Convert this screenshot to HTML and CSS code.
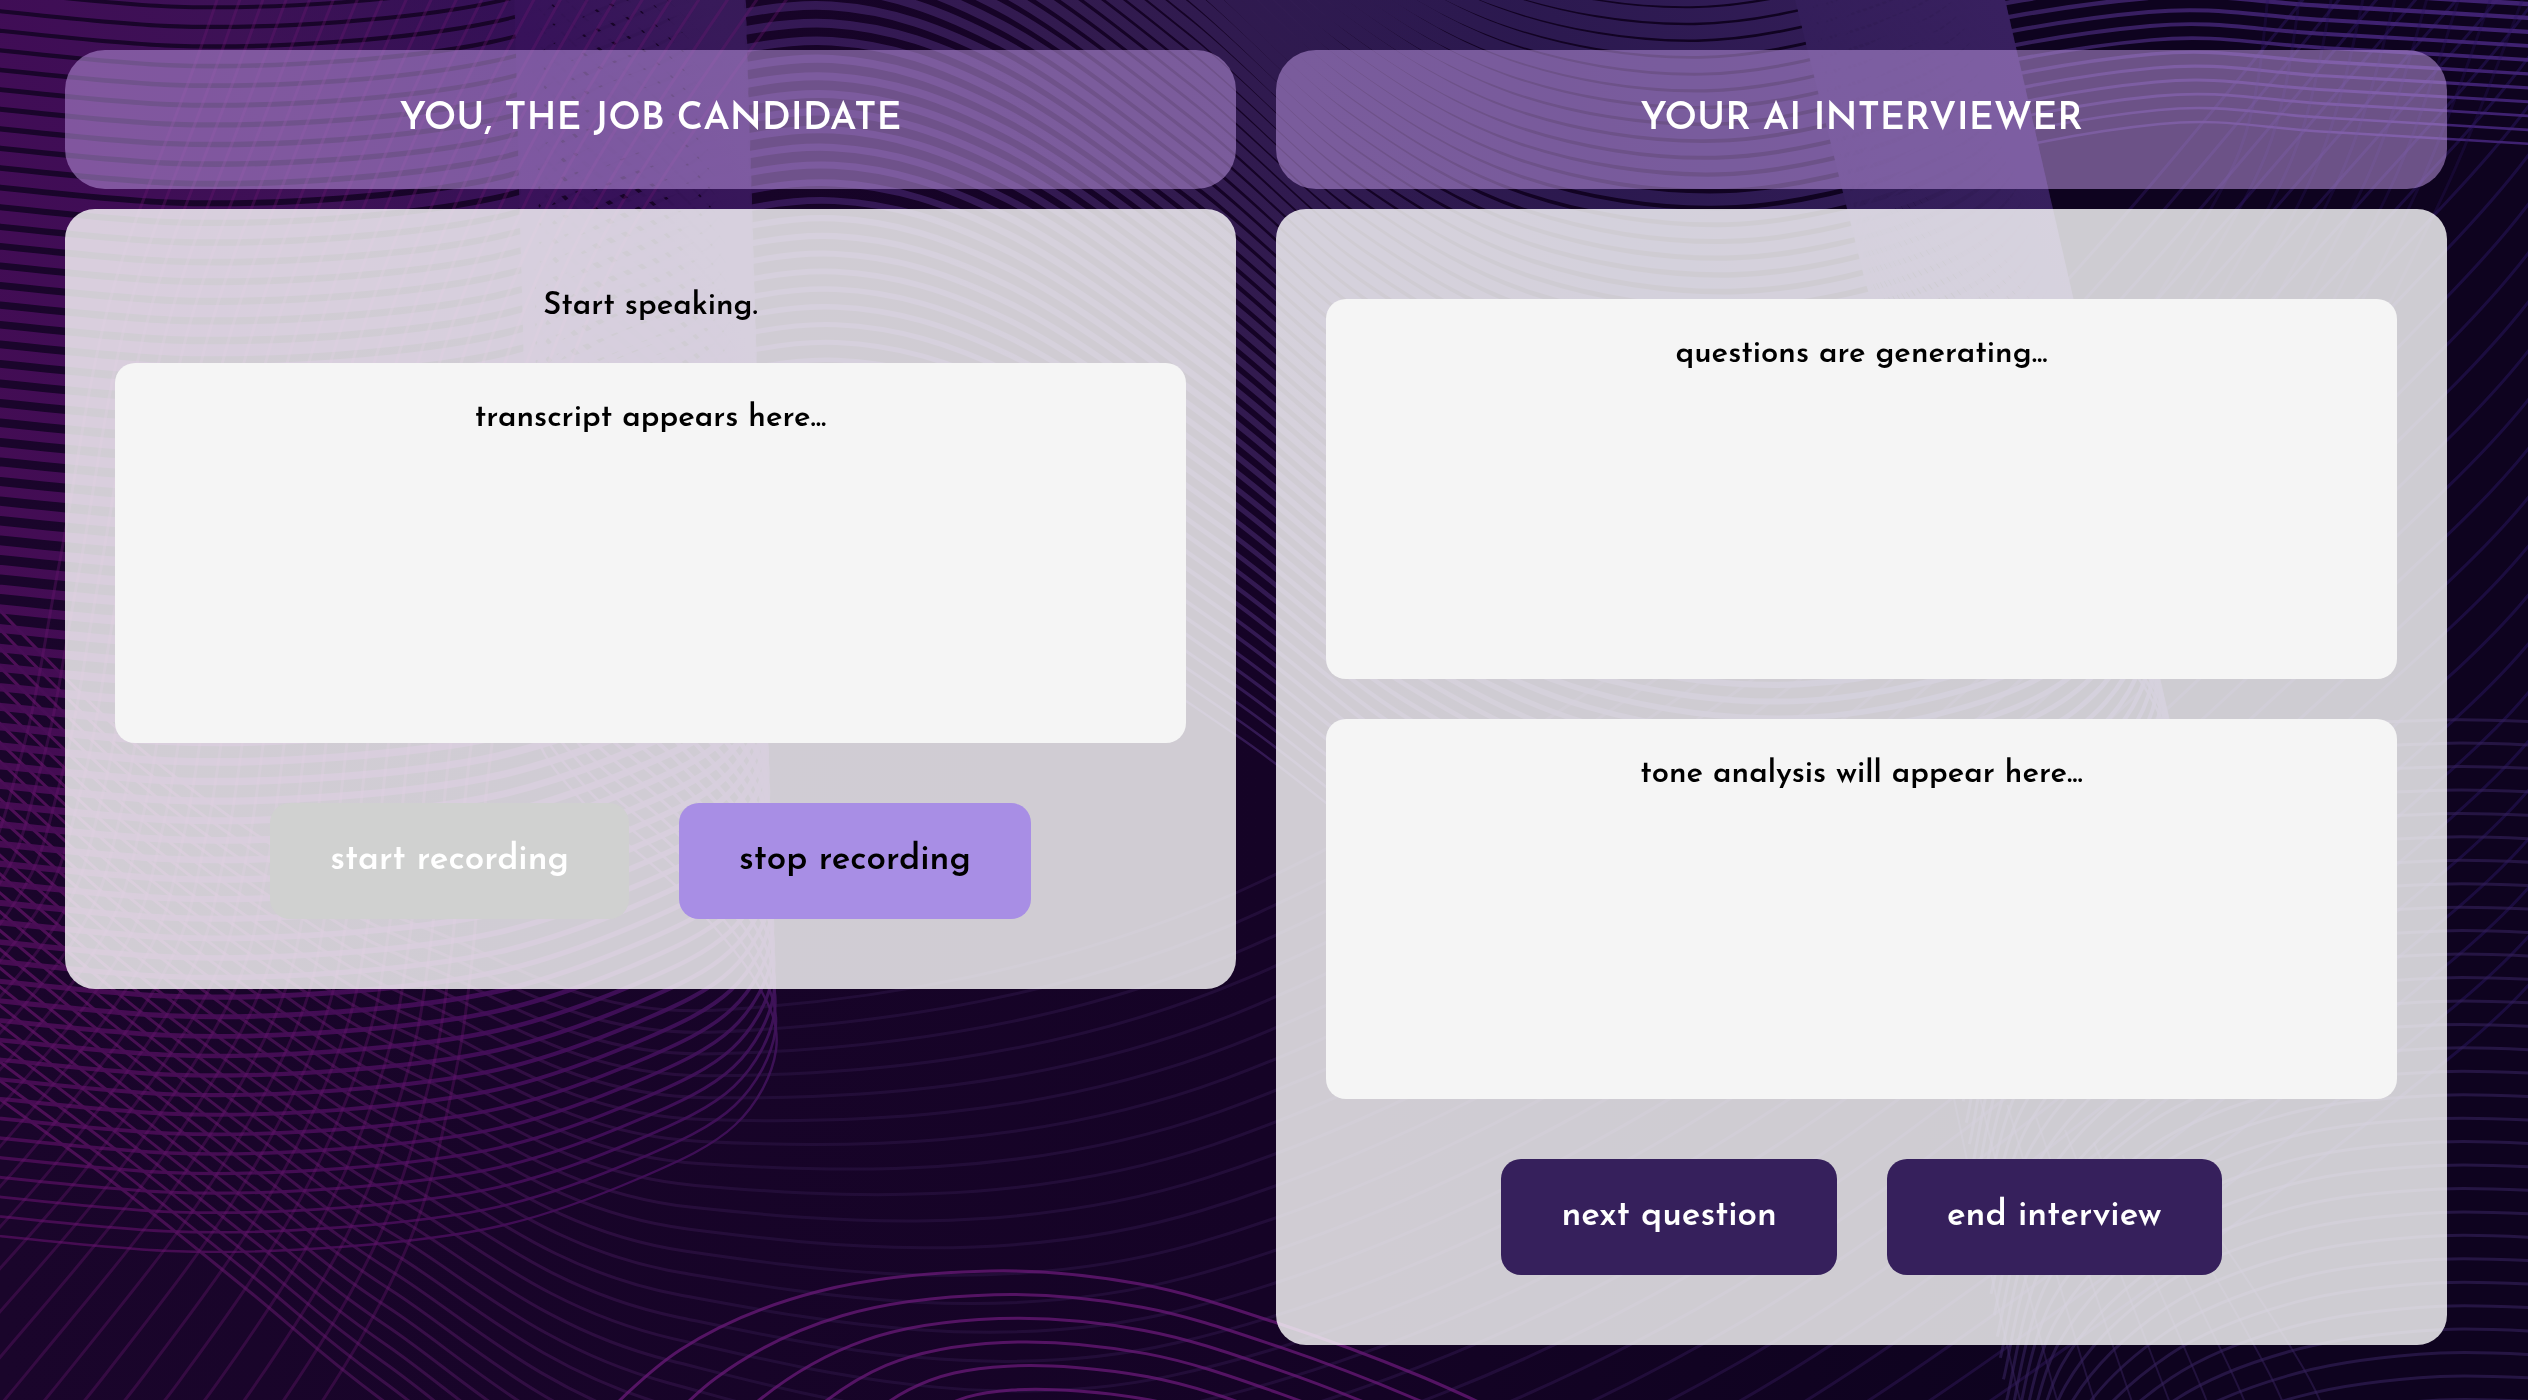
FILE: index.html
```html
<!DOCTYPE html>
<html lang="en">
<head>
    <meta charset="UTF-8">
    <meta name="viewport" content="width=device-width, initial-scale=1.0">
    <title>AI Interviewer</title>
    <link rel="stylesheet" href="styles.css">
</head>
<body>
    <svg class="waves" id="waves" viewBox="0 0 2528 1400" preserveAspectRatio="xMidYMid slice" aria-hidden="true">
        <defs>
            <linearGradient id="ribbon" gradientUnits="userSpaceOnUse" x1="0" y1="900" x2="2200" y2="-300">
                <stop offset="0" stop-color="#4a0d56"/>
                <stop offset="0.17" stop-color="#430e5a"/>
                <stop offset="0.25" stop-color="#40135a"/>
                <stop offset="0.35" stop-color="#37125a"/>
                <stop offset="0.42" stop-color="#381a5a"/>
                <stop offset="0.55" stop-color="#351d52"/>
                <stop offset="0.7" stop-color="#2e1b54"/>
                <stop offset="0.87" stop-color="#38205f"/>
                <stop offset="1" stop-color="#432478"/>
            </linearGradient>
            <linearGradient id="thread" gradientUnits="userSpaceOnUse" x1="0" y1="0" x2="2528" y2="0">
                <stop offset="0" stop-color="#5c1263"/>
                <stop offset="0.15" stop-color="#441252"/>
                <stop offset="0.3" stop-color="#26103c"/>
                <stop offset="0.6" stop-color="#26103f"/>
                <stop offset="1" stop-color="#1f0f48"/>
            </linearGradient>
        </defs>
    </svg>

    <main class="container">
        <section class="column">
            <h2 class="title">YOU, THE JOB CANDIDATE</h2>
            <div class="panel">
                <p class="status" id="status">Start speaking.</p>
                <div class="text-box" id="transcript">transcript appears here...</div>
                <div class="button-group">
                    <button type="button" id="startBtn" disabled>start recording</button>
                    <button type="button" id="stopBtn">stop recording</button>
                </div>
            </div>
        </section>

        <section class="column">
            <h2 class="title">YOUR AI INTERVIEWER</h2>
            <div class="panel panel-ai">
                <div class="text-box" id="question">questions are generating...</div>
                <div class="text-box" id="tone">tone analysis will appear here...</div>
                <div class="button-group">
                    <button type="button" id="nextBtn">next question</button>
                    <button type="button" id="endBtn">end interview</button>
                </div>
            </div>
        </section>
    </main>

    <script src="script.js"></script>
</body>
</html>
```
FILE: styles.css
```css
* {
    box-sizing: border-box;
}
body {
    margin: 0;
    min-height: 100vh;
    font-family: 'Josefin Sans', Lato, sans-serif;
    font-size: 31px;
    font-weight: 600;
    line-height: 48px;
    color: #000;
    background: linear-gradient(to right, #1a052b, #150326 50%, #0e031f 80%);
}
.waves {
    position: fixed;
    inset: 0;
    width: 100%;
    height: 100%;
    z-index: -1;
    fill: none;
}
.container {
    display: flex;
    align-items: flex-start;
    gap: 40px;
    padding: 50px 81px 50px 65px;
}
.column {
    flex: 1;
    min-width: 0;
    text-align: center;
}
.title {
    margin: 0 0 20px;
    padding: 46px 20px 45px;
    border-radius: 40px;
    background-color: rgba(180, 143, 214, 0.57);
    color: white;
    font-size: 38px;
    font-weight: 600;
}
.panel {
    padding: 70px 50px;
    border-radius: 30px;
    background-color: rgba(255, 255, 255, 0.8);
}
.panel-ai {
    padding-top: 90px;
}
.status {
    margin: 0 0 32px;
    padding-top: 4px;
}
.text-box {
    min-height: 380px;
    padding: 32px;
    border-radius: 20px;
    background-color: #f5f5f5;
}
.text-box + .text-box {
    margin-top: 40px;
}
.button-group {
    display: flex;
    justify-content: center;
    gap: 50px;
    margin-top: 60px;
}
button {
    padding: 34px 60px;
    border: none;
    border-radius: 20px;
    background-color: #36205c;
    color: white;
    font-family: inherit;
    font-size: 35px;
    font-weight: 600;
    line-height: 48px;
    cursor: pointer;
}
button:hover {
    background-color: #4a2f7a;
}
#stopBtn {
    background-color: #a88ee5;
    color: black;
}
#startBtn:disabled {
    background-color: #d0d1d0;
    cursor: default;
}
```
FILE: script.js
```js
const svg = document.getElementById('waves');

// Smooth curve through a list of points
function smooth(pts) {
    let d = `M${pts[0][0]},${pts[0][1]}`;
    for (let i = 0; i < pts.length - 1; i++) {
        const p0 = pts[i - 1] || pts[i];
        const p1 = pts[i];
        const p2 = pts[i + 1];
        const p3 = pts[i + 2] || p2;
        d += `C${p1[0] + (p2[0] - p0[0]) / 6},${p1[1] + (p2[1] - p0[1]) / 6} `
            + `${p2[0] - (p3[0] - p1[0]) / 6},${p2[1] - (p3[1] - p1[1]) / 6} ${p2[0]},${p2[1]}`;
    }
    return d;
}

// Draw count + 1 lines blended from one curve to another
function blend(from, to, count, stroke, width, opacity) {
    for (let k = 0; k <= count; k++) {
        const t = k / count;
        const pts = from.map((p, i) => [
            p[0] + (to[i][0] - p[0]) * t,
            p[1] + (to[i][1] - p[1]) * t
        ]);
        const path = document.createElementNS('http://www.w3.org/2000/svg', 'path');
        path.setAttribute('d', smooth(pts));
        path.setAttribute('stroke', stroke);
        path.setAttribute('stroke-width', width(t));
        path.setAttribute('opacity', opacity);
        svg.appendChild(path);
    }
}

// long folded ribbon, [x, y, shift x, shift y] to the top line
const ribbon = [
    [-40, 1232, 0, -1372], [170, 1251, 0, -1372], [340, 1247, 0, -1372],
    [500, 1226, -10, -1370], [640, 1178, -25, -1360], [735, 1125, -40, -1350],
    [776, 1050, -48, -1340], [755, 980, -48, -1330], [680, 890, -45, -1310],
    [590, 810, -25, -1290], [535, 730, -25, -1270], [560, 650, -25, -1260],
    [660, 590, -20, -1250], [840, 555, -20, -1240], [1020, 600, -40, -1220],
    [1236, 735, -80, -1210], [1420, 870, -110, -1190], [1620, 960, -150, -1180],
    [1850, 985, -190, -1170], [2080, 930, -240, -1150], [2178, 820, -255, -1100],
    [2152, 700, -255, -1080], [2040, 560, -250, -1060], [1925, 400, -240, -1030],
    [1862, 250, -240, -1000], [1940, 170, -200, -1000], [2160, 124, -100, -980],
    [2330, 132, -40, -980], [2580, 147, 0, -980]
];

// faint threads under everything
const threadTop = [[-20, 590], [130, 740], [280, 850], [430, 930], [720, 1010], [1264, 880], [1900, 450], [2447, -180], [2600, -400]];
const threadEnd = [[-20, 1085], [110, 1180], [250, 1292], [382, 1400], [640, 1580], [1100, 1740], [1700, 1580], [2447, 1060], [2600, 860]];
blend(threadTop, threadEnd, 26, 'url(#thread)', () => 3, 0.8);

blend(
    ribbon.map(p => [p[0] + p[2], p[1] + p[3]]),
    ribbon.map(p => [p[0], p[1]]),
    70, 'url(#ribbon)', t => 17 - 14.6 * t, 0.92
);

// rising threads on the left
blend(
    [[-600, 1430], [-470, 1300], [-240, 1100], [-40, 900], [20, 760], [60, 560], [110, 300], [200, 50], [300, -250]],
    [[200, 1560], [323, 1400], [410, 1240], [452, 1090], [472, 960], [490, 760], [530, 500], [620, 250], [800, -20]],
    22, '#6a1670', () => 3, 0.35
);

// magenta arcs at the bottom edge
blend(
    [[560, 1460], [680, 1350], [820, 1291], [990, 1271], [1140, 1284], [1280, 1324], [1420, 1376], [1560, 1440]],
    [[800, 1600], [860, 1490], [930, 1415], [1012, 1390], [1150, 1400], [1280, 1440], [1420, 1500], [1560, 1570]],
    5, '#6a1a78', () => 3, 0.75
);

// lower right mesh
blend(
    [[1960, 1080], [2000, 930], [2120, 800], [2280, 735], [2440, 720], [2580, 724]],
    [[2050, 1700], [2090, 1560], [2180, 1470], [2300, 1420], [2440, 1400], [2580, 1404]],
    29, '#35225c', () => 3, 0.6
);
blend(
    [[1950, 1080], [2020, 1400], [2060, 1500]],
    [[2180, 1180], [2310, 1380], [2350, 1500]],
    8, '#35225c', () => 2, 0.5
);

// upper right threads
blend(
    [[2130, 340], [2240, 150], [2270, -20]],
    [[2330, 420], [2450, 180], [2530, -20]],
    8, '#2a1360', () => 3, 0.3
);
```
